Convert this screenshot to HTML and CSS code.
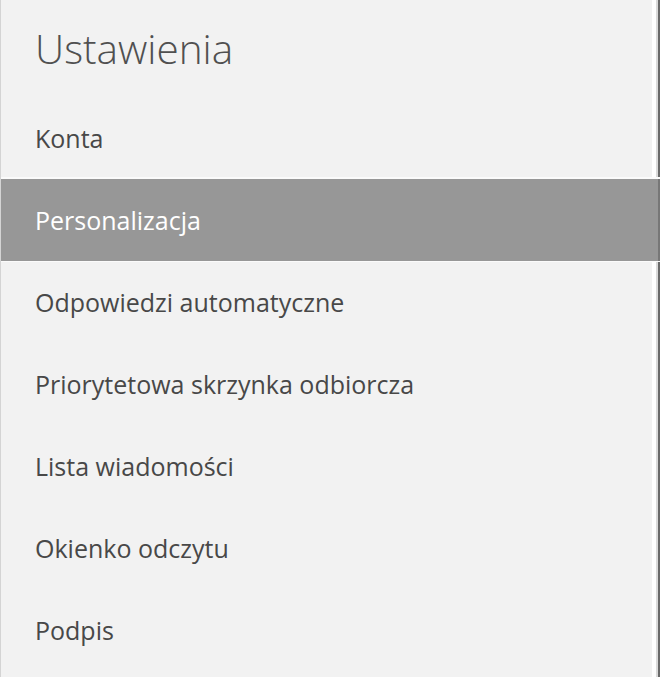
FILE: index.html
```html
<!DOCTYPE html>
<html lang="pl">
<head>
<meta charset="utf-8">
<title>Ustawienia</title>
<link rel="stylesheet" href="styles.css">
</head>
<body>
<div class="panel">
  <h1 class="title">Ustawienia</h1>
  <ul class="menu">
    <li class="item">Konta</li>
    <li class="item selected">Personalizacja</li>
    <li class="item">Odpowiedzi automatyczne</li>
    <li class="item">Priorytetowa skrzynka odbiorcza</li>
    <li class="item">Lista wiadomości</li>
    <li class="item">Okienko odczytu</li>
    <li class="item">Podpis</li>
  </ul>
</div>
</body>
</html>
```

FILE: styles.css
```css
html, body {
  margin: 0;
  padding: 0;
  height: 100%;
}
body {
  background: #f2f2f2;
  font-family: "Open Sans", "Noto Sans", "Liberation Sans", sans-serif;
  overflow: hidden;
}
.panel {
  height: 677px;
  box-sizing: border-box;
  border-left: 1px solid #d4d4d4;
  background: linear-gradient(to right, #f2f2f2 0, #f2f2f2 651px, #ffffff 651px, #ffffff 655px, #dadada 655px, #dadada 657px, #6a6a6a 657px);
}
.title {
  margin: 0;
  height: 97px;
  display: flex;
  align-items: center;
  padding-left: 34px;
  font-size: 40.5px;
  font-weight: 300;
  color: #505050;
}
.menu {
  list-style: none;
  margin: 0;
  padding: 0;
}
.item {
  height: 82px;
  display: flex;
  align-items: center;
  padding-left: 34px;
  font-size: 25px;
  color: #484848;
}
.item.selected {
  background: linear-gradient(to right, #979797 0, #979797 657px, #777777 657px);
  color: #ffffff;
  box-shadow: 0 -2px 0 #fbfbfb, 0 1px 0 #fbfbfb;
}
```
